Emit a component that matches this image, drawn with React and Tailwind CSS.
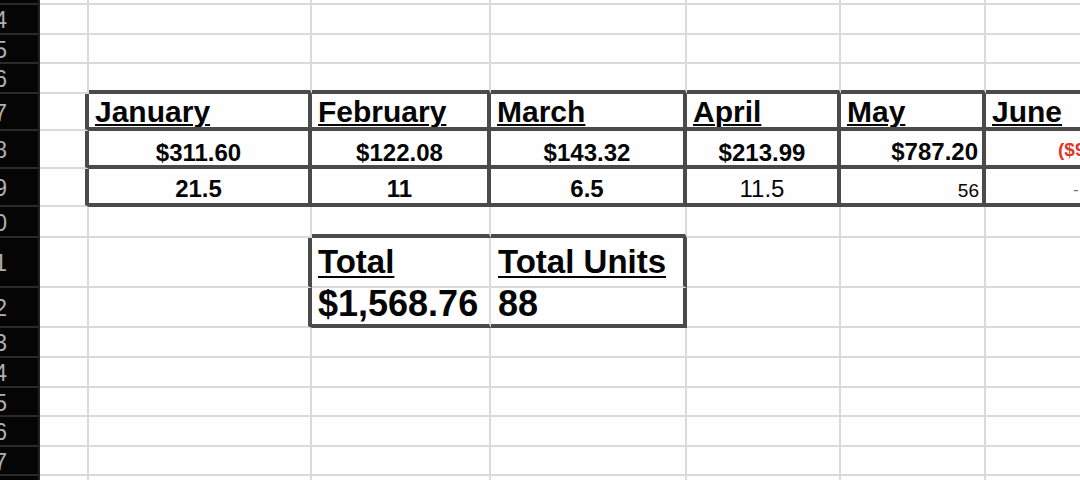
const rows = [
  { n: 3, h: 'h-[5px]' },
  { n: 4, h: 'h-[30px]' },
  { n: 5, h: 'h-[29px]' },
  { n: 6, h: 'h-[30px]' },
  { n: 7, h: 'h-[37px]' },
  { n: 8, h: 'h-[38px]' },
  { n: 9, h: 'h-[38px]' },
  { n: 10, h: 'h-[31px]' },
  { n: 11, h: 'h-[50px]' },
  { n: 12, h: 'h-[40px]' },
  { n: 13, h: 'h-[30px]' },
  { n: 14, h: 'h-[30px]' },
  { n: 15, h: 'h-[29px]' },
  { n: 16, h: 'h-[30px]' },
  { n: 17, h: 'h-[29px]' },
  { n: 18, h: 'h-[30px]' },
];

const cols = ['w-[49px]', 'w-[223px]', 'w-[179px]', 'w-[196px]', 'w-[154px]', 'w-[145px]', 'w-[200px]'];

const months = ['January', 'February', 'March', 'April', 'May', 'June'];

const R_LIGHT = 'border-r-2 border-r-[#dadada]';
const R_DARK = 'border-r-4 border-r-[#4a4a4a]';
const B_LIGHT = 'border-b-2 border-b-[#dadada]';
const B_DARK = 'border-b-4 border-b-[#4a4a4a]';

function rightDark(r, c) {
  if (r >= 7 && r <= 9) return true;
  if ((r === 11 || r === 12) && (c === 1 || c === 3)) return true;
  return false;
}

function bottomDark(r, c) {
  if (r >= 6 && r <= 9 && c >= 1) return true;
  if ((r === 10 || r === 12) && (c === 2 || c === 3)) return true;
  return false;
}

const head = 'flex items-end pl-[6px] text-[30px] font-bold leading-none underline decoration-2 underline-offset-[2px] whitespace-nowrap';
const money = 'flex items-end justify-center text-[24px] font-bold leading-none';
const units = 'flex items-end justify-center pb-[2px] text-[24px] leading-none';

function content(r, c) {
  if (r === 7 && c >= 1) {
    return <div className={`${head} h-full ${c === 1 ? 'pl-[5px]' : ''}`}>{months[c - 1]}</div>;
  }
  if (r === 8) {
    if (c === 1) return <div className={`${money} h-full`}>$311.60</div>;
    if (c === 2) return <div className={`${money} h-full`}>$122.08</div>;
    if (c === 3) return <div className={`${money} h-full`}>$143.32</div>;
    if (c === 4) return <div className={`${money} h-full`}>$213.99</div>;
    if (c === 5) return <div className="flex h-full items-end justify-end pr-[4px] pb-[1px] text-[24px] font-bold leading-none">$787.20</div>;
    if (c === 6) return <div className="flex h-full items-center pl-[72px] pt-[3px] text-[19px] font-bold leading-none text-[#e3342a] whitespace-nowrap">($93.41)</div>;
  }
  if (r === 9) {
    if (c === 1) return <div className={`${units} font-bold h-full`}>21.5</div>;
    if (c === 2) return <div className={`${units} font-bold h-full`}>11</div>;
    if (c === 3) return <div className={`${units} font-bold h-full`}>6.5</div>;
    if (c === 4) return <div className={`${units} h-full`}>11.5</div>;
    if (c === 5) return <div className="flex h-full items-end justify-end pr-[3px] pb-[3px] text-[19px] leading-none">56</div>;
    if (c === 6) return <div className="flex h-full items-end pl-[87px] pb-[5px] text-[17px] leading-none text-[#777]">-</div>;
  }
  if (r === 11) {
    if (c === 2) return <div className="flex h-full items-end pl-[6px] pb-[8px] text-[33px] font-bold leading-none underline decoration-2 underline-offset-[3px]">Total</div>;
    if (c === 3) return <div className="flex h-full items-end pl-[7px] pb-[8px] text-[33px] font-bold leading-none underline decoration-2 underline-offset-[3px] whitespace-nowrap">Total Units</div>;
  }
  if (r === 12) {
    if (c === 2) return <div className="flex h-full items-end pl-[6px] pb-[2px] text-[36px] font-bold leading-none whitespace-nowrap">$1,568.76</div>;
    if (c === 3) return <div className="flex h-full items-end pl-[7px] pb-[2px] text-[36px] font-bold leading-none">88</div>;
  }
  return null;
}

export default function App() {
  return (
    <div
      className="flex h-[480px] w-[1080px] overflow-hidden bg-[#fefefe] text-[#050505]"
      style={{ fontFamily: '"Liberation Sans", Arial, sans-serif' }}
    >
      {/* row numbers */}
      <div className="flex w-[40px] shrink-0 flex-col bg-[#050505] border-r-2 border-r-[#222]">
        {rows.map((row) => (
          <div
            key={row.n}
            className={`${row.h} shrink-0 flex items-center justify-end overflow-hidden pr-[31px] pt-[3px] border-b-2 border-b-[#2a2a2a] text-[23px] leading-none text-[#b0b0b0] whitespace-nowrap`}
          >
            {row.n > 3 ? row.n : ''}
          </div>
        ))}
      </div>

      {/* sheet */}
      <div className="flex min-w-0 flex-1 flex-col">
        {rows.map((row) => (
          <div key={row.n} className={`${row.h} flex shrink-0`}>
            {cols.map((w, c) => (
              <div
                key={c}
                className={`${w} h-full shrink-0 overflow-hidden ${rightDark(row.n, c) ? R_DARK : R_LIGHT} ${bottomDark(row.n, c) ? B_DARK : B_LIGHT}`}
              >
                {content(row.n, c)}
              </div>
            ))}
          </div>
        ))}
      </div>
    </div>
  );
}
